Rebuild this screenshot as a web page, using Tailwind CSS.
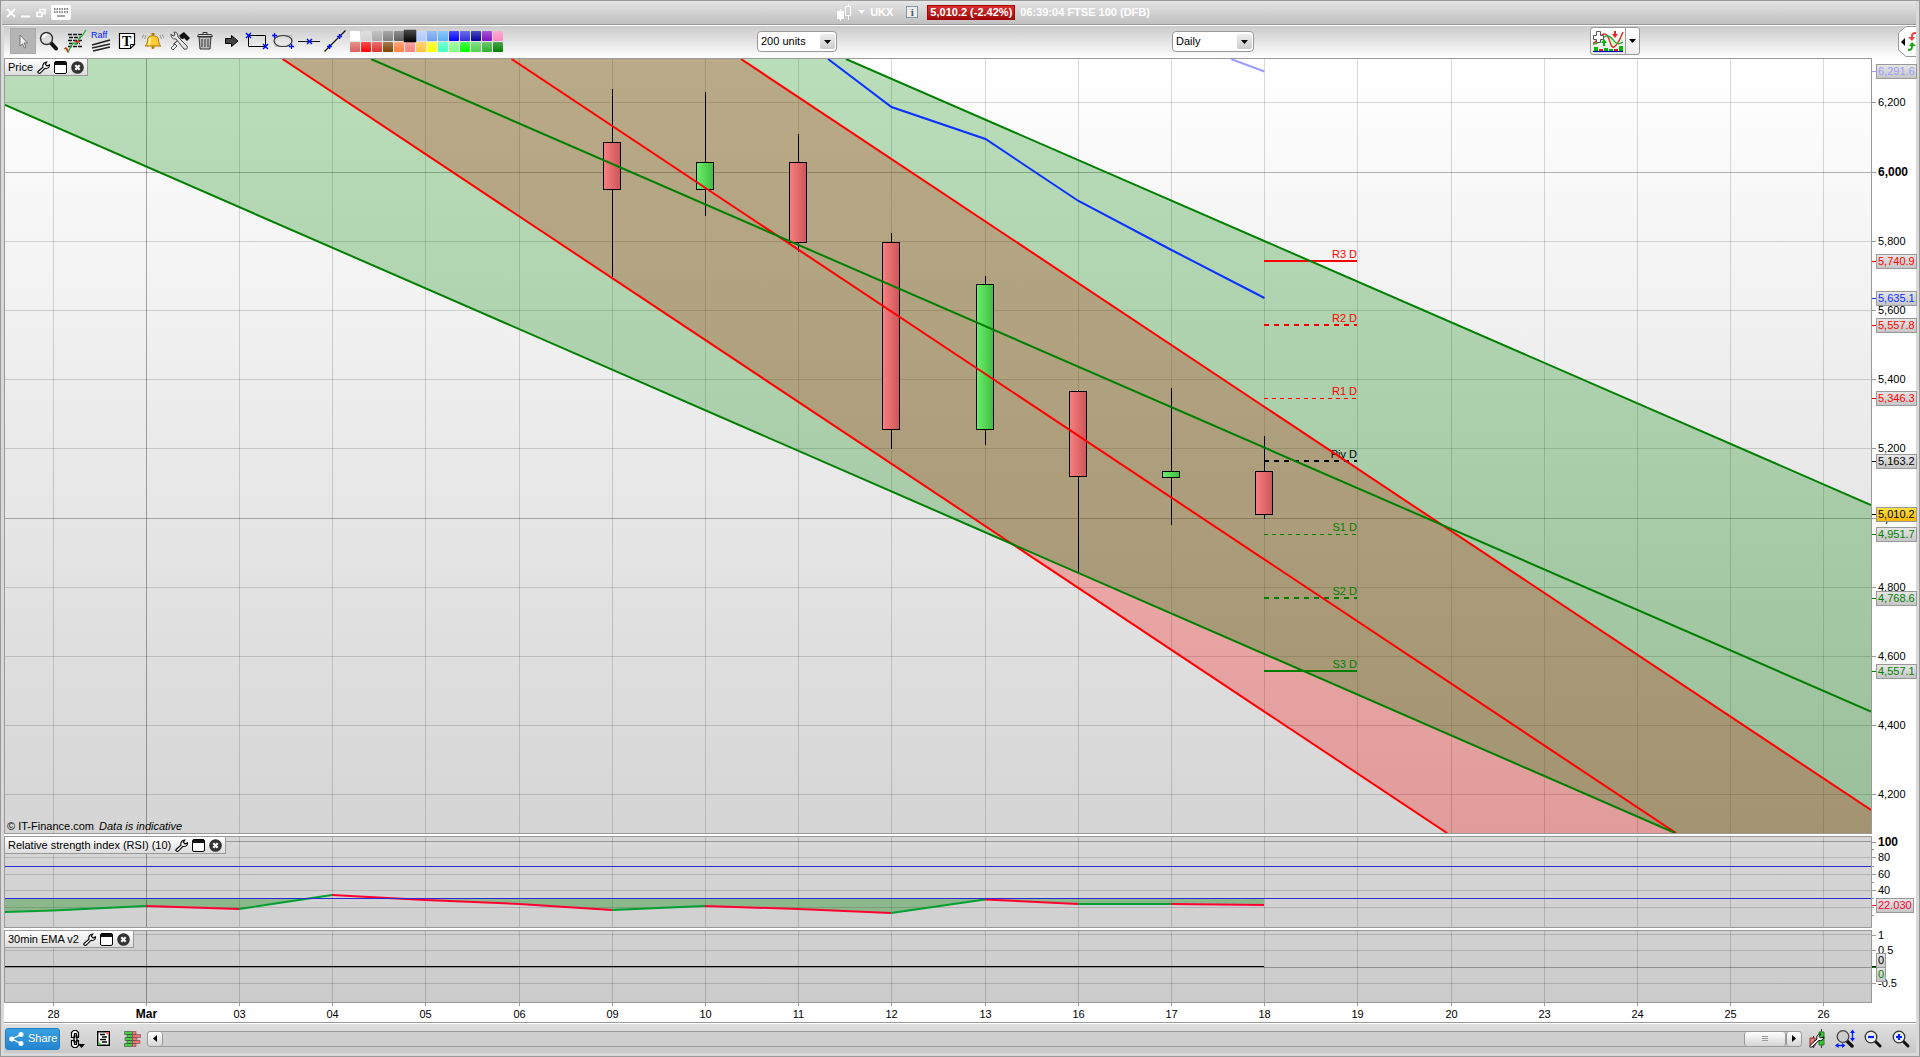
<!DOCTYPE html>
<html lang="en">
<head>
    <meta charset="UTF-8">
    <meta name="viewport" content="width=device-width, initial-scale=1.0">
    <title>UKX - FTSE 100 (DFB)</title>
    <script src="https://cdn.jsdelivr.net/npm/@tailwindcss/browser@4"></script>
</head>
<body class="h-screen overflow-hidden bg-[#d9d9d9] font-['Liberation_Sans',Arial,sans-serif] text-[11px] text-black">
    <!-- icons used more than once -->
    <svg class="hidden">
        <symbol id="wrench" viewBox="0 0 13 13"><path d="M1 10.5 6 6.2C5.3 3.5 7 1 9.8 1L8.3 3.2 10 5l2.5-1.2C12.6 6.5 10.300 8 8 7.400L3 12.300C1.500 12.800.400 11.500 1 10.500Z" fill="#fff" stroke="#000" stroke-width="1.100"/></symbol>
        <symbol id="window" viewBox="0 0 13 13"><rect x=".5" y=".5" width="12" height="12" rx="1.500" fill="#fff" stroke="#000"/><path d="M1 1h11v3H1z" fill="#111"/></symbol>
        <symbol id="close" viewBox="0 0 13 13"><circle cx="6.500" cy="6.500" r="6.300" fill="#333"/><path d="m4.300 4.300 4.400 4.400m0-4.400L4.300 8.700" stroke="#fff" stroke-width="2.200"/></symbol>
        <symbol id="down" viewBox="0 0 7 4"><path d="M0 0h7L3.500 4z"/></symbol>
    </svg>

    <div class="flex h-full flex-col border border-[#999] pb-[3px] pl-[3px] pr-[3px]">
        <header class="-ml-[2px] grid h-[24px] shrink-0 grid-cols-[836fr_1080fr] items-center border-b border-[#999] bg-linear-to-b from-[#e4e4e4] to-[#c0c0c0] font-bold text-white">
            <div class="flex items-center pl-1">
                <button aria-label="Close" class="w-[15px]"><svg class="h-[10px] w-[10px]" viewBox="0 0 10 10"><path d="m1 1 8 8m0-8L1 9" stroke="#fff" stroke-width="2"/></svg></button>
                <button aria-label="Minimize" class="w-[15px]"><svg class="h-[10px] w-[10px]" viewBox="0 0 10 10"><path d="M0 8.500h9" stroke="#fff" stroke-width="2"/></svg></button>
                <button aria-label="Restore" class="w-[15px]"><svg class="h-[10px] w-[10px]" viewBox="0 0 10 10"><path d="M4 3.500V1.500h5v4H7M1 4.500h5v4H1z" fill="none" stroke="#fff" stroke-width="1.500"/></svg></button>
                <button aria-label="Keyboard"><svg class="h-[15px] w-[20px]" viewBox="0 0 20 15"><rect width="20" height="15" rx="2" fill="#fff"/><path d="M3 4h14M3 7h14" stroke="#888" stroke-width="2" stroke-dasharray="1.500 1"/><path d="M6 11h8" stroke="#888" stroke-width="1.500"/></svg></button>
            </div>
            <div class="flex items-center pb-[1px]">
                <button class="flex items-center gap-[5px]">
                    <svg class="h-[17px] w-[16px]" viewBox="0 0 16 17"><path d="M0 7h7v8H0zM3 5h1v12H3zM11 0h1v3h-1zM11 12h1v4h-1z" fill="#fff"/><path d="M8.500 2.500h5v9h-5z" fill="none" stroke="#fff"/></svg>
                    <svg class="h-[4px] w-[7px] fill-white"><use href="#down"/></svg>
                    UKX
                </button>
                <button aria-label="Information" class="ml-[13px] h-[12px] w-[12px] border border-[#8199a3] bg-[#eee] text-center font-['Liberation_Serif',serif] leading-[10px] text-[#555]">i</button>
                <span class="ml-[9px] h-[15px] border border-[#a00] bg-linear-to-b from-[#d83030] to-[#a00808] px-[2px] leading-[13px]">5,010.2 (-2.42%)</span>
                <span class="ml-[5px]">06:39:04 FTSE 100 (DFB)</span>
            </div>
        </header>

        <div class="grid h-[33px] shrink-0 grid-cols-[753fr_415fr_418fr_326fr] border-t border-white bg-linear-to-b from-[#cbcbcb] to-white">
            <div class="flex items-start pl-[6px] pt-[2px]">
                <div id="tools" class="flex">
                    <button aria-label="Pointer" class="h-[26px] w-[26px] border border-[#aaa] bg-[#b4b4b4]"><svg viewBox="1 1 24 24"><path d="M10 7v11l2.500-2 2 4 1.500-1-2-4h3.500z" fill="#eee" stroke="#777"/></svg></button>
                    <button aria-label="Zoom" class="h-[26px] w-[26px]"><svg viewBox="0 0 26 26"><path d="m15 15 5 5.500" stroke="#111" stroke-width="4" stroke-linecap="round"/><circle cx="10.500" cy="10.500" r="6" fill="#ddd" stroke="#333" stroke-width="1.500"/><path d="M7 10a4 4 0 0 1 4-3.500" stroke="#fff" stroke-width="2" fill="none"/></svg></button>
                    <button aria-label="Indicators" class="h-[26px] w-[26px]"><svg viewBox="0 0 26 26"><path d="M6 6.500h14M7 9.500h12M6 12.500h14M7 15.500h11M6 18.500h14" stroke="#111" stroke-width="1.500" stroke-dasharray="4 1"/><path d="m2 21 2-1 2 4 5-9 3 1 4-7 2-1 4-6" fill="none" stroke="#1db535" stroke-width="1.300"/><path d="m3 20 2 1 1 3M13 13l3 1 2-1" fill="none" stroke="#e22" stroke-width="1.500"/></svg></button>
                    <button aria-label="Raff channel" class="h-[26px] w-[26px]"><svg viewBox="0 0 26 26"><text x="3" y="10" font-size="9" fill="#0020ff">Raff</text><path d="m4 17 18-5M4 20l18-4M5 23l17-4" stroke="#222" stroke-width="1.300"/></svg></button>
                    <button aria-label="Text" class="h-[26px] w-[26px]"><svg viewBox="0 0 26 26"><path d="M5.500 5.500h15v11l-4 4h-11z" fill="#fff" stroke="#000" stroke-width="1.200"/><path d="M20.500 16.500h-4v4" fill="none" stroke="#000"/><text x="8" y="17.500" font-size="14" font-weight="bold" font-family="Liberation Serif">T</text></svg></button>
                    <button aria-label="Alerts" class="h-[26px] w-[26px]"><svg viewBox="0 0 26 26"><path d="M5 18c3-2 2-6 3-8 1-3 9-3 10 0 1 2 0 6 3 8z" fill="#fc3" stroke="#a87800"/><path d="M10 10c0 3 0 5-1 7" stroke="#fff3a0" stroke-width="2" fill="none"/><circle cx="13" cy="19.500" r="1.500" fill="#b88400"/><path d="M13 5v2" stroke="#a87800" stroke-width="3"/><path d="M6 7 4.500 11M3.500 6.500 2.500 10M20 7l1.500 4M22.500 6.500l1 3.500" stroke="#999"/></svg></button>
                    <button aria-label="Settings" class="h-[26px] w-[26px]"><svg viewBox="0 0 26 26"><path d="m8 17 9-8" stroke="#333" stroke-width="3"/><path d="m6 20 10-9" stroke="#eee" stroke-width="3"/><path d="m15 6 3-2 6 6-3 3-3-3-2 1-3-3z" fill="#111"/><path d="M5 6c0 5 3 5 5 5l8 10c3 1 4-1 3-3L12 9c0-3-1-5-4-5l1 3-2 1z" fill="#e4e4e4" stroke="#444"/><path d="m5 20 4-4 2 2-4 4z" fill="#eee" stroke="#555"/></svg></button>
                    <button aria-label="Delete" class="h-[26px] w-[26px]"><svg viewBox="0 0 26 26"><path d="M7 9h12l-1 12H8z" fill="#bbb" stroke="#333"/><path d="M5.500 8.500h15l-1-2h-13z" fill="#ddd" stroke="#333"/><path d="M11 6V4.500h4V6M10 11v8m3-8v8m3-8v8" fill="none" stroke="#333"/></svg></button>
                    <button aria-label="Arrow" class="h-[26px] w-[26px]"><svg viewBox="0 0 26 26"><path d="M7.500 10.500h6V7.500l6.500 5.500-6.500 5.500v-3h-6z" fill="#444" stroke="#000"/></svg></button>
                    <button aria-label="Rectangle" class="h-[26px] w-[26px]"><svg viewBox="0 0 26 26"><path d="M4.500 7.500h17v11h-17z" fill="none" stroke="#000"/><path d="m2 5 5 5m0-5-5 5M19 16l5 5m0-5-5 5" stroke="#0010ff" stroke-width="1.500"/></svg></button>
                    <button aria-label="Ellipse" class="h-[26px] w-[26px]"><svg viewBox="0 0 26 26"><path d="M5 7.500h17v11H5z" fill="none" stroke="#bbb"/><ellipse cx="13" cy="13" rx="9" ry="5.500" fill="none" stroke="#333" stroke-width="1.200"/><path d="M2 7.500h5M4.500 5v5M19 18.500h5M21.500 16v5" stroke="#0010ff" stroke-width="1.300"/></svg></button>
                    <button aria-label="Horizontal line" class="h-[26px] w-[26px]"><svg viewBox="0 0 26 26"><path d="M2 13.500h22" stroke="#111"/><path d="m11 11 5 5m0-5-5 5" stroke="#0010ff" stroke-width="1.500"/></svg></button>
                    <button aria-label="Trend line" class="h-[26px] w-[26px]"><svg viewBox="0 0 26 26"><path d="M2.500 23.500 23.500 2.500" stroke="#111" stroke-width="1.200"/><path d="M5 18.500h5M7.500 16v5M15 8.500h5M17.500 6v5" stroke="#0010ff" stroke-width="1.500"/></svg></button>
                </div>
                <div id="palette" class="ml-[2px] mt-[3px] grid grid-cols-14 gap-px"></div>
            </div>
            <label class="relative mt-[5px] h-[21px] w-[80px]">
                <select aria-label="Units" class="h-full w-full appearance-none rounded-[4px] border border-[#999] bg-white px-[3px]"><option>200 units</option></select>
                <span class="pointer-events-none absolute right-[2px] top-[3px] flex h-[15px] w-[15px] items-center justify-center rounded-[2px] bg-linear-to-b from-[#eee] to-[#ccc]"><svg class="h-[4px] w-[7px]"><use href="#down"/></svg></span>
            </label>
            <label class="relative mt-[5px] h-[21px] w-[82px]">
                <select aria-label="Period" class="h-full w-full appearance-none rounded-[4px] border border-[#999] bg-white px-[3px]"><option>Daily</option></select>
                <span class="pointer-events-none absolute right-[2px] top-[3px] flex h-[15px] w-[15px] items-center justify-center rounded-[2px] bg-linear-to-b from-[#eee] to-[#ccc]"><svg class="h-[4px] w-[7px]"><use href="#down"/></svg></span>
            </label>
            <div class="flex items-start">
                <div class="mt-[1px] flex h-[28px] w-[50px] rounded-[3px] border border-[#999] bg-linear-to-b from-white to-[#eee]">
                    <button aria-label="Add indicator" class="w-[35px] border-r border-[#999]"><svg viewBox="0 0 34 26"><path d="M2 15c4 2 8-10 12-9s5 15 9 13 5-8 9-13v8c-5 6-10-6-16-7-4 0-7 12-14 8z" fill="#cfc"/><path d="M2 15c4 0 7-10 12-9s5 15 9 13 6-8 9-15" fill="none" stroke="#d33" stroke-width="1.500"/><path d="M2 16c7 1 9-9 15-8s7 12 15 6" fill="none" stroke="#3a3" stroke-width="1.300"/><path d="M5.500 3.500h4v4h3v4h-3v3h-4v-3h-3v-4h3z" fill="#fff" stroke="#555"/><path d="m13 11 3 4h-2v3h-2v-3h-2z" fill="#0b0"/><path d="m24 10 3-4h-2V3h-2v3h-2z" fill="#e22"/><path d="M3 19h4v4H3zM13 20h4v3h-4zM28 18h4v5h-4zM18 21h4v2h-4z" fill="#0b0"/><path d="M8 21h4v2H8zM23 21h4v2h-4z" fill="#d22"/><path d="M2 23.500h30" stroke="#00c" stroke-width="1.200"/></svg></button>
                    <button aria-label="More indicators" class="flex flex-1 items-center justify-center"><svg class="h-[4px] w-[7px]"><use href="#down"/></svg></button>
                </div>
                <button aria-label="Trading panel" class="ml-auto"><svg class="h-[31px] w-[18px]" viewBox="0 0 18 31"><path d="M18 .5H8L.500 7v17L8 30.500h10" fill="#fff" stroke="#999"/><path d="m7 12-4 4 4 4z"/><path d="M18 6c-4 0-5 2-5 5h-3l4 4 3-4h-2c0-2 0-3 3-3z" fill="#e44"/><path d="M10 25c4 0 5-2 5-5h3l-4-4-3 4h2c0 2 0 3-3 3z" fill="#1a1"/></svg></button>
            </div>
        </div>

        <main class="grid min-h-0 flex-1 grid-cols-[minmax(0,1fr)_44px] grid-rows-[776fr_92fr_73fr] gap-y-[2px] bg-white">
            <section class="relative overflow-hidden border border-[#999] bg-linear-to-b from-white to-[#d5d5d5]">
                <svg id="priceBack" class="absolute inset-0 h-full w-full" viewBox="5 59 1866 774" preserveAspectRatio="none"></svg>
                <div id="pivots" class="absolute inset-0"></div>
                <svg id="priceFront" class="absolute inset-0 h-full w-full" viewBox="5 59 1866 774" preserveAspectRatio="none"></svg>
                <div class="absolute left-0 top-0 flex h-[17px] items-center gap-[4px] border-b border-r border-[#999] bg-linear-to-b from-white to-[#ddd] pl-[3px] pr-[3px]">
                    <h2>Price</h2>
                    <button aria-label="Price settings"><svg class="h-[13px] w-[13px]"><use href="#wrench"/></svg></button>
                    <button aria-label="Price window"><svg class="h-[13px] w-[13px]"><use href="#window"/></svg></button>
                    <button aria-label="Close price"><svg class="h-[13px] w-[13px]"><use href="#close"/></svg></button>
                </div>
                <p class="absolute bottom-0 left-[2px] leading-[13px]">© IT-Finance.com <i class="ml-[2px]">Data is indicative</i></p>
            </section>
            <div id="priceAxis" class="relative my-px"></div>

            <section class="relative overflow-hidden border border-[#999] bg-linear-to-b from-[#d7d7d7] to-[#d0d0d0]">
                <svg id="rsi" class="absolute inset-0 h-full w-full" viewBox="5 837 1866 90" preserveAspectRatio="none"></svg>
                <div class="absolute left-0 top-0 flex h-[17px] items-center gap-[4px] border-b border-r border-[#999] bg-linear-to-b from-white to-[#ddd] pl-[3px] pr-[3px]">
                    <h2>Relative strength index (RSI) (10)</h2>
                    <button aria-label="RSI settings"><svg class="h-[13px] w-[13px]"><use href="#wrench"/></svg></button>
                    <button aria-label="RSI window"><svg class="h-[13px] w-[13px]"><use href="#window"/></svg></button>
                    <button aria-label="Close RSI"><svg class="h-[13px] w-[13px]"><use href="#close"/></svg></button>
                </div>
            </section>
            <div id="rsiAxis" class="relative my-px"></div>

            <section class="relative overflow-hidden border border-[#999] bg-linear-to-b from-[#d1d1d1] to-[#cbcbcb]">
                <svg id="ema" class="absolute inset-0 h-full w-full" viewBox="5 931 1866 71" preserveAspectRatio="none"></svg>
                <div class="absolute left-0 top-0 flex h-[17px] items-center gap-[4px] border-b border-r border-[#999] bg-linear-to-b from-white to-[#ddd] pl-[3px] pr-[3px]">
                    <h2>30min EMA v2</h2>
                    <button aria-label="EMA settings"><svg class="h-[13px] w-[13px]"><use href="#wrench"/></svg></button>
                    <button aria-label="EMA window"><svg class="h-[13px] w-[13px]"><use href="#window"/></svg></button>
                    <button aria-label="Close EMA"><svg class="h-[13px] w-[13px]"><use href="#close"/></svg></button>
                </div>
            </section>
            <div id="emaAxis" class="relative my-px"></div>
        </main>
        <div class="h-[20px] shrink-0 border-b border-[#999] bg-white pl-px pr-[45px]">
            <div id="dates" class="relative h-full"></div>
        </div>

        <footer class="flex h-[30px] shrink-0 items-center border-t border-white bg-linear-to-b from-[#dfdfdf] to-[#c9c9c9] pl-px">
            <button class="flex h-[22px] w-[55px] items-center gap-[4px] rounded-[3px] border border-[#1c7fc8] bg-linear-to-b from-[#3a9fe2] to-[#2585cf] pl-[3px] text-white">
                <svg class="h-[14px] w-[15px]" viewBox="0 0 15 14"><path d="M12 2.500 3 7l9 4.500" fill="none" stroke="#fff" stroke-width="1.300"/><g fill="#fff"><circle cx="12" cy="2.500" r="2.500"/><circle cx="2.700" cy="7" r="2.500"/><circle cx="12" cy="11.500" r="2.500"/></g></svg>
                Share
            </button>
            <button aria-label="Link charts" class="ml-[10px]"><svg class="h-[18px] w-[16px]" viewBox="0 0 16 18"><g fill="none" stroke="#000" stroke-width="1.200"><path d="M2.500 7.500h-1v-5l2-2h3l2 2v5H6.500v-4h-2v4zM1.500 10.500v5l2 2h3l2-2v-5H6.500v4h-2v-4z" fill="#fff"/><path d="M4 6h3v6H4z"/></g><path d="M8 14h7l-3.500 4z"/></svg></button>
            <button aria-label="Reports" class="ml-[11px]"><svg class="h-[15px] w-[13px]" viewBox="0 0 13 15"><path d="M.7.7h11.600v13.600H.7z" fill="#fff" stroke="#000" stroke-width="1.400"/><path d="M3 3.500h5M5 6h5M3 8.500h6M5 11h5" stroke="#000" stroke-width="1.600"/><path d="M8 1h4v4z" fill="#e66"/><path d="M1 10v4h4z" fill="#3b3"/></svg></button>
            <button aria-label="Order book" class="ml-[14px]"><svg class="h-[16px] w-[17px]" viewBox="0 0 17 16"><g fill="#4c4" stroke="#444" stroke-width=".6"><path d="M.5.500h8v3h-8zM3 3.500h5.500v3H3zM1 6.500h7.500v3H1zM3 9.500h5.500v3H3zM.5 12.500h8v3h-8z"/></g><g fill="#e77" stroke="#744" stroke-width=".6"><path d="M8.500.500H12v3H8.500zM8.500 3.500h8v3h-8zM8.500 6.500H13v3H8.500zM8.500 9.500h7.500v3H8.500zM8.500 12.500H12v3H8.500z"/></g></svg></button>
            <div class="ml-[6px] flex h-[16px] flex-1 rounded-[3px] border border-[#999] bg-[#cfcfcf]">
                <button aria-label="Scroll left" class="flex w-[15px] items-center justify-center rounded-[3px] border-r border-[#999] bg-linear-to-b from-white to-[#d5d5d5]"><svg class="h-[7px] w-[4px]" viewBox="0 0 4 7"><path d="M4 0v7L0 3.500z"/></svg></button>
                <div class="ml-auto flex w-[42px] flex-col items-center justify-center gap-px rounded-[3px] border-x border-[#999] bg-linear-to-b from-white to-[#d5d5d5]"><i class="h-px w-[6px] bg-[#999]"></i><i class="h-px w-[6px] bg-[#999]"></i><i class="h-px w-[6px] bg-[#999]"></i></div>
                <button aria-label="Scroll right" class="flex w-[15px] items-center justify-center rounded-[3px] border-l border-[#999] bg-linear-to-b from-white to-[#d5d5d5]"><svg class="h-[7px] w-[4px]" viewBox="0 0 4 7"><path d="M0 0v7l4-3.500z"/></svg></button>
            </div>
            <button aria-label="Chart settings" class="ml-[7px]"><svg class="h-[19px] w-[17px]" viewBox="0 0 17 19"><path d="M12.500 0v19M4.500 7v12" stroke="#333"/><path d="M10 3h5v13h-5z" fill="#3c3" stroke="#272"/><path d="M1 9h5v8H1z" fill="#e77" stroke="#833"/><path d="M1 16.500 8 10c-1-3 1-5 4-5l-2 2.500L11.500 9 15 8c-.500 3-3 4-5 3.500L3 18c-2 .500-3-.500-2-1.500Z" fill="#fff" stroke="#000"/></svg></button>
            <button aria-label="Auto zoom" class="ml-[9px]"><svg class="h-[19px] w-[20px]" viewBox="0 0 20 19"><path d="m11 11 6 6" stroke="#111" stroke-width="3.500" stroke-linecap="round"/><circle cx="8" cy="7.500" r="5.800" fill="#ccc" stroke="#444" stroke-width="1.300"/><path d="M17.500 2v9M1 16.500h8" stroke="#02f" stroke-width="1.300"/><path d="m15 4 2.500-3.500L20 4zM15 9l2.500 3.500L20 9zM3.500 14 0 16.500 3.500 19zM7 14l3.500 2.500L7 19z" fill="#02f"/></svg></button>
            <button aria-label="Zoom out" class="ml-[9px]"><svg class="h-[18px] w-[18px]" viewBox="0 0 18 18"><path d="m11 11 5 5" stroke="#111" stroke-width="3" stroke-linecap="round"/><circle cx="7" cy="7" r="5.800" fill="#eee" stroke="#333" stroke-width="1.300"/><path d="M4 7h6" stroke="#02f" stroke-width="2.200"/></svg></button>
            <button aria-label="Zoom in" class="ml-[10px] mr-[6px]"><svg class="h-[18px] w-[18px]" viewBox="0 0 18 18"><path d="m11 11 5 5" stroke="#111" stroke-width="3" stroke-linecap="round"/><circle cx="7" cy="7" r="5.800" fill="#eee" stroke="#333" stroke-width="1.300"/><path d="M4 7h6M7 4v6" stroke="#02f" stroke-width="2.200"/></svg></button>
        </footer>
    </div>

    <script>
        const get = id => document.getElementById(id)

        // colour palette
        const colors = ['#ffffff', '#d2d2d2', '#a8a8a8', '#808080', '#606060', '#000000', '#b0c8ff', '#6aa0f4', '#5aaff4', '#0000ff', '#3030d8', '#0000a0', '#8010c0', '#ff88c0',
            '#d96060', '#ff0000', '#e03030', '#804000', '#ff8040', '#f88080', '#ffc040', '#ffff00', '#40ffc0', '#80ff80', '#00ff00', '#50d050', '#30b030', '#008000']
        get('palette').innerHTML = colors.map((c, i) =>
            `<button aria-label="${c}" class="h-[10px] w-[10px] rounded-[1px] bg-linear-to-b from-white/30 to-transparent ${i === 5 ? 'z-10 scale-130' : ''}" style="background-color:${c}"></button>`).join('')

        // vertical grid
        const days = [[53, '28'], [146, 'Mar'], [239, '03'], [332, '04'], [425, '05'], [519, '06'], [612, '09'], [705, '10'], [798, '11'], [891, '12'],
            [985, '13'], [1078, '16'], [1171, '17'], [1264, '18'], [1357, '19'], [1451, '20'], [1544, '23'], [1637, '24'], [1730, '25'], [1823, '26']]
        const left = x => (x + 0.5 - 5) / 1866 * 100
        get('dates').innerHTML = days.map(([x, d]) =>
            `<i class="absolute top-0 h-[3px] w-px bg-[#999]" style="left:${(x - 5) / 1866 * 100}%"></i>
            <span class="absolute top-[4px] -translate-x-1/2 leading-[14px] ${d === 'Mar' ? 'text-[12px] font-bold' : ''}" style="left:${left(x)}%">${d}</span>`).join('')

        function line(x1, y1, x2, y2, color, width = 1, extra = '') {
            return `<path d="M${x1} ${y1}L${x2} ${y2}" fill="none" stroke="${color}" stroke-width="${width}" ${extra}/>`
        }
        function grid(rows, top, bottom, strong) {
            return days.map(([x, d]) => line(x + 0.5, top, x + 0.5, bottom, d === 'Mar' ? '#0005' : '#00000026')).join('') +
                rows.map(y => line(5, y + 0.5, 1871, y + 0.5, strong.includes(y) ? '#0000004a' : '#00000026')).join('')
        }

        // price panel
        const priceRows = [102, 172, 241, 310, 379, 448, 518, 587, 656, 725, 794]
        get('priceBack').innerHTML = grid(priceRows, 59, 833, [172, 518]) +
            '<path d="M282.5 59H741L1871 810V833H1447Z" fill="#ff0000" fill-opacity=".27"/>' +
            '<path d="M5 59H846L1871 505V833H1675L5 105Z" fill="#008000" fill-opacity=".27"/>'

        const pivots = [['R3 D', 261, '#ff0000', 2, ''], ['R2 D', 325, '#ff0000', 2, '5 5'], ['R1 D', 398, '#ff0000', 1, '4 4'], ['Piv D', 461, '#000000', 2, '5 5'],
            ['S1 D', 534, '#008000', 1, '4 4'], ['S2 D', 598, '#008000', 2, '5 5'], ['S3 D', 671, '#008000', 2, '']]
        get('pivots').innerHTML = pivots.map(([t, y, c]) =>
            `<span class="absolute -translate-x-full -translate-y-full leading-[13px]" style="left:${(1357 - 5) / 1866 * 100}%;top:${(y - 59) / 774 * 100}%;color:${c}">${t}</span>`).join('')

        // x, high, body top, body bottom, low, up
        const candles = [[612, 89, 142, 190, 277, 0], [705, 92, 162, 190, 216, 1], [798, 134, 162, 243, 252, 0], [891, 233, 242, 430, 449, 0],
            [985, 276, 284, 430, 445, 1], [1078, 390, 391, 477, 572, 0], [1171, 388, 471, 478, 525, 1], [1264, 436, 471, 515, 519, 0]]
        get('priceFront').innerHTML = `<defs>
                <linearGradient id="down-fill"><stop stop-color="#f88080"/><stop offset="1" stop-color="#cc5555"/></linearGradient>
                <linearGradient id="up-fill"><stop stop-color="#6cf06c"/><stop offset="1" stop-color="#40bc40"/></linearGradient>
            </defs>` +
            pivots.map(([t, y, c, w, dash]) => line(1264, w === 1 ? y + 0.5 : y, 1357, w === 1 ? y + 0.5 : y, c, w, `stroke-dasharray="${dash}"`)).join('') +
            candles.map(([x, h, t, b, l, up]) => line(x + 0.5, h, x + 0.5, l, '#000') +
                `<rect x="${x - 8.5}" y="${t + 0.5}" width="17" height="${b - t - 1}" fill="url(#${up ? 'up' : 'down'}-fill)" stroke="#000"/>`).join('') +
            '<path d="M828 59 891.5 107 985.5 139 1078.5 201 1171.5 250 1264.5 298" fill="none" stroke="#0a32ff" stroke-width="2"/>' +
            line(1231, 59, 1264.5, 71.5, '#9c9cff', 2) +
            line(282.5, 59, 1447, 833, '#ff0000', 2) + line(511.5, 59, 1676, 833, '#ff0000', 2) + line(741, 59, 1871, 810, '#ff0000', 2) +
            line(5, 105, 1675, 833, '#008000', 2) + line(371, 59, 1871, 711.5, '#008000', 2) + line(846, 59, 1871, 505, '#008000', 2)

        // rsi panel
        const rsiRows = [841, 857, 874, 890, 907]
        const rsi = [[5, 912], [53, 910.5], [146, 906], [239, 909], [332, 895], [425, 900], [519, 904], [612, 910], [705, 906], [798, 909], [891, 913], [985, 899.5], [1078, 904], [1171, 904], [1264, 905]]
        get('rsi').innerHTML = grid(rsiRows, 837, 927, [841]) +
            '<path d="M5 898.500V912L53 910.500 146 906 239 909 309 898.500ZM396 898.500 425 900 519 904 612 910 705 906 798 909 891 913 985 899.500 1078 904 1264 905V898.500Z" fill="#008000" fill-opacity=".33"/>' +
            rsi.slice(1).map(([x, y], i) => line(rsi[i][0], rsi[i][1], x, y, y <= rsi[i][1] ? '#00a030' : '#ff0033', 2)).join('') +
            line(5, 866.5, 1871, 866.5, '#2a2ad8') + line(5, 898.5, 1871, 898.5, '#2a2ad8')

        // ema panel
        const emaRows = [934, 950, 967, 983]
        get('ema').innerHTML = grid(emaRows, 931, 1002, [967]) + line(5, 966.5, 1264, 966.5, '#000')

        // right hand scales
        function scale(id, top, height, labels, boxes, small = []) {
            const at = y => (y - top) / height * 100
            get(id).innerHTML =
                labels.map(([t, y, bold]) => `<i class="absolute left-0 h-px w-[4px] bg-[#999]" style="top:${at(y)}%"></i>
                    <span class="absolute left-[6px] -translate-y-1/2 leading-[14px] ${bold ? 'text-[12px] font-bold' : ''}" style="top:${at(y)}%">${t}</span>`).join('') +
                small.map(y => `<i class="absolute left-0 h-px w-[2px] bg-[#999]" style="top:${at(y)}%"></i>`).join('') +
                boxes.map(([t, y, c, fill = 'from-[#e6e6e6] to-[#c6c6c6]', tick = y]) => `<i class="absolute left-0 h-px w-[4px]" style="top:${at(tick)}%;background:${c}"></i>
                    <span class="absolute left-[4px] -mt-[7px] h-[15px] border border-[#999] bg-linear-to-b px-px leading-[13px] ${t.length > 1 ? 'min-w-[36px]' : ''} ${fill}" style="top:${at(y)}%;color:${c}">${t}</span>`).join('')
        }
        scale('priceAxis', 59, 774,
            priceRows.map((y, i) => [(6200 - i * 200).toLocaleString('en-US'), y, i === 1 || i === 6]),
            [['6,291.6', 71, '#9c9cff'], ['5,740.9', 261, '#ff0000'], ['5,635.1', 298, '#0a32ff'], ['5,557.8', 325, '#ff0000'], ['5,346.3', 398, '#ff0000'], ['5,163.2', 461, '#000000'],
                ['5,010.2', 514, '#000000', 'from-[#ffe040] to-[#f5b800]'], ['4,951.7', 534, '#008000'], ['4,768.6', 598, '#008000'], ['4,557.1', 671, '#008000']])
        scale('rsiAxis', 837, 90, [['100', 842, true], ['80', 857], ['60', 874], ['40', 890]], [['22.030', 905, '#ff0033']], [849, 866, 882, 898, 907, 915])
        scale('emaAxis', 931, 71, [['1', 935], ['0.5', 950], ['-0.5', 983]], [['0', 960, '#000000', 'from-[#e6e6e6] to-[#c6c6c6]', 966], ['0', 974, '#008000', 'from-[#e6e6e6] to-[#c6c6c6]', 967]])
    </script>
</body>
</html>
